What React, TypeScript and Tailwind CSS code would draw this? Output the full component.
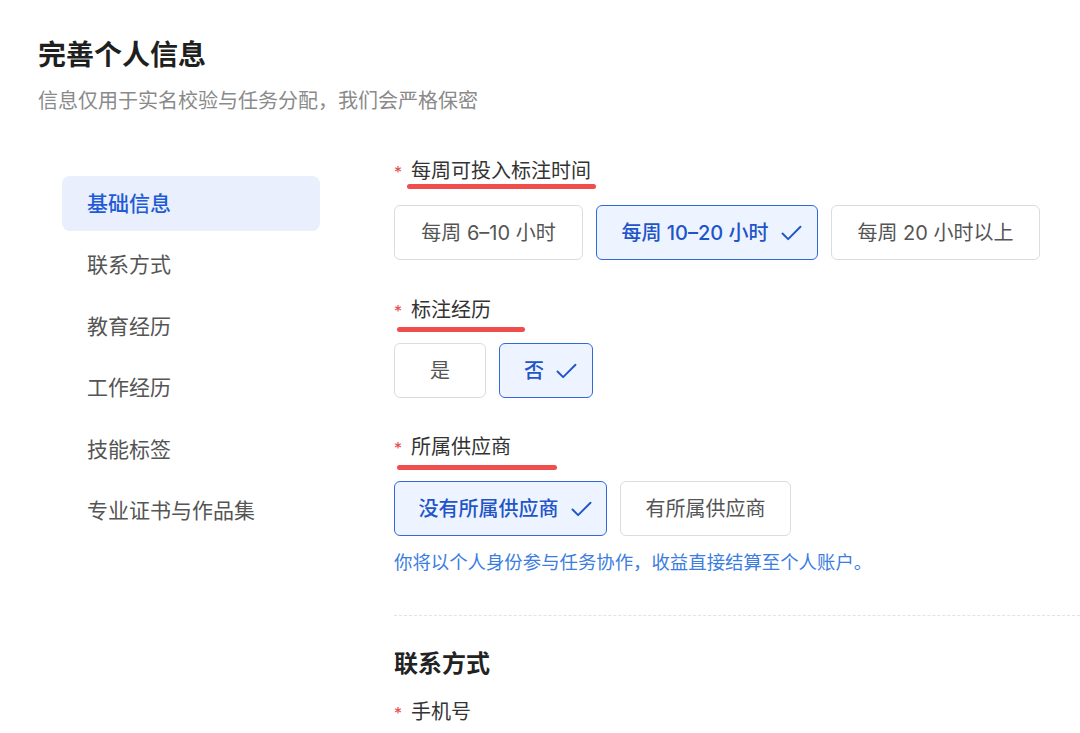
import { Check } from 'lucide-react';

type Option = { label: string; selected?: boolean; width: string };

type Field = {
  label: string;
  options: Option[];
  mark: { left: string; width: string; top: string };
  spacing: string;
};

const fields: Field[] = [
  {
    label: '每周可投入标注时间',
    spacing: 'mt-0',
    mark: { left: 'left-[13px]', width: 'w-[189px]', top: 'top-[27px]' },
    options: [
      { label: '每周 6–10 小时', width: 'w-[189px]' },
      { label: '每周 10–20 小时', selected: true, width: 'w-[222px]' },
      { label: '每周 20 小时以上', width: 'w-[209px]' },
    ],
  },
  {
    label: '标注经历',
    spacing: 'mt-[36px]',
    mark: { left: 'left-[3px]', width: 'w-[128px]', top: 'top-[31px]' },
    options: [
      { label: '是', width: 'w-[92px]' },
      { label: '否', selected: true, width: 'w-[94px]' },
    ],
  },
  {
    label: '所属供应商',
    spacing: 'mt-[35px]',
    mark: { left: 'left-[3px]', width: 'w-[160px]', top: 'top-[32px]' },
    options: [
      { label: '没有所属供应商', selected: true, width: 'w-[213px]' },
      { label: '有所属供应商', width: 'w-[171px]' },
    ],
  },
];

const navItems = ['基础信息', '联系方式', '教育经历', '工作经历', '技能标签', '专业证书与作品集'];

function Label({ text, mark }: { text: string; mark?: Field['mark'] }) {
  return (
    <div className="relative flex items-center h-[28px]">
      <span className="text-[#e5484d] text-[16px] w-[17px] leading-none pt-[2px]">*</span>
      <span className="text-[20px] text-[#333]">{text}</span>
      {mark && (
        <span
          className={`absolute ${mark.left} ${mark.width} ${mark.top} h-[5px] rounded-full bg-[#f04d4d]`}
        />
      )}
    </div>
  );
}

function ChoiceButton({ option }: { option: Option }) {
  if (option.selected) {
    return (
      <div
        className={`${option.width} h-[55px] flex items-center justify-center gap-[9px] pl-[12px] rounded-[6px] border-[1.5px] border-[#3169d8] bg-[#eef4ff] text-[#1f55c8] text-[20px] font-medium`}
      >
        <span>{option.label}</span>
        <Check size={27} strokeWidth={1.7} className="mt-[1px]" />
      </div>
    );
  }
  return (
    <div
      className={`${option.width} h-[55px] flex items-center justify-center rounded-[6px] border border-[#dcdcdc] bg-white text-[#555] text-[20px]`}
    >
      {option.label}
    </div>
  );
}

export default function App() {
  return (
    <div
      className="w-[1080px] h-[733px] overflow-hidden bg-white pl-[38px] pt-[35px]"
      style={{ fontFamily: 'Inter, "Noto Sans CJK SC", sans-serif' }}
    >
      <h1 className="text-[28px] leading-[40px] font-semibold text-[#1f1f1f]">完善个人信息</h1>
      <p className="mt-[12px] text-[20px] leading-[28px] text-[#8a8a8a]">
        信息仅用于实名校验与任务分配，我们会严格保密
      </p>

      <div className="mt-[42px] flex">
        {/* side nav */}
        <nav className="ml-[24px] mt-[19px] w-[258px] flex flex-col gap-[6.5px]">
          {navItems.map((item, i) => (
            <div
              key={item}
              className={
                i === 0
                  ? 'h-[55px] flex items-center pl-[25px] rounded-[8px] bg-[#e9effc] text-[#1f5bd6] text-[21px] font-medium'
                  : 'h-[55px] flex items-center pl-[25px] text-[#555] text-[21px]'
              }
            >
              {item}
            </div>
          ))}
        </nav>

        {/* form */}
        <div className="ml-[74px] flex-1">
          {fields.map((field) => (
            <div key={field.label} className={field.spacing}>
              <Label text={field.label} mark={field.mark} />
              <div className={`flex gap-[13px] ${field.label === '标注经历' ? 'mt-[19px]' : 'mt-[20px]'}`}>
                {field.options.map((o) => (
                  <ChoiceButton key={o.label} option={o} />
                ))}
              </div>
            </div>
          ))}

          <p className="mt-[13px] text-[18.4px] leading-[26px] text-[#3b7de0]">
            你将以个人身份参与任务协作，收益直接结算至个人账户。
          </p>

          <div className="mt-[40px] border-t border-dashed border-[#e3e3e3]" />

          <h2 className="mt-[31px] text-[24px] leading-[34px] font-semibold text-[#222]">联系方式</h2>
          <div className="mt-[17px]">
            <Label text="手机号" />
          </div>
        </div>
      </div>
    </div>
  );
}
